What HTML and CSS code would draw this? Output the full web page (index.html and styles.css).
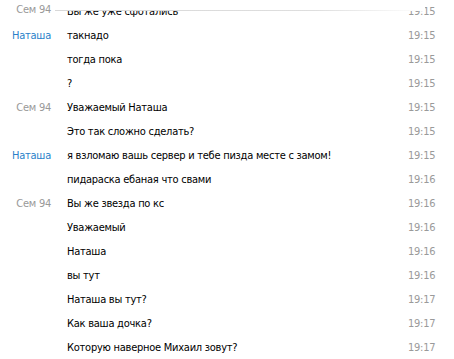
FILE: index.html
```html
<!DOCTYPE html>
<html lang="ru">
<head>
<meta charset="utf-8">
<link rel="stylesheet" href="styles.css">
</head>
<body>
<div class="log">
  <div class="topbar"></div>
  <div class="row first"><span class="name gray">Сем 94</span><span class="msg">Вы же уже сфотались</span><span class="time">19:15</span></div>
  <div class="row"><span class="name blue">Наташа</span><span class="msg">такнадо</span><span class="time">19:15</span></div>
  <div class="row"><span class="name"></span><span class="msg">тогда пока</span><span class="time">19:15</span></div>
  <div class="row"><span class="name"></span><span class="msg">?</span><span class="time">19:15</span></div>
  <div class="row"><span class="name gray">Сем 94</span><span class="msg">Уважаемый Наташа</span><span class="time">19:15</span></div>
  <div class="row"><span class="name"></span><span class="msg">Это так сложно сделать?</span><span class="time">19:15</span></div>
  <div class="row"><span class="name blue">Наташа</span><span class="msg">я взломаю вашь сервер и тебе пизда месте с замом!</span><span class="time">19:15</span></div>
  <div class="row"><span class="name"></span><span class="msg">пидараска ебаная что свами</span><span class="time">19:16</span></div>
  <div class="row"><span class="name gray">Сем 94</span><span class="msg">Вы же звезда по кс</span><span class="time">19:16</span></div>
  <div class="row"><span class="name"></span><span class="msg">Уважаемый</span><span class="time">19:16</span></div>
  <div class="row"><span class="name"></span><span class="msg">Наташа</span><span class="time">19:16</span></div>
  <div class="row"><span class="name"></span><span class="msg">вы тут</span><span class="time">19:16</span></div>
  <div class="row"><span class="name"></span><span class="msg">Наташа вы тут?</span><span class="time">19:17</span></div>
  <div class="row"><span class="name"></span><span class="msg">Как ваша дочка?</span><span class="time">19:17</span></div>
  <div class="row"><span class="name"></span><span class="msg">Которую наверное Михаил зовут?</span><span class="time">19:17</span></div>
</div>
</body>
</html>
```

FILE: styles.css
```css
html, body {
  margin: 0;
  padding: 0;
  background: #ffffff;
}
body {
  font-family: "DejaVu Sans Condensed", "DejaVu Sans", sans-serif;
  font-size: 11px;
  letter-spacing: -0.25px;
  color: #000;
  width: 454px;
  height: 359px;
  overflow: hidden;
}
.log {
  position: relative;
  display: flex;
  flex-direction: column;
}
.topbar {
  position: absolute;
  left: 55px;
  top: 0;
  width: 370px;
  height: 10px;
  background: #fff;
  border-bottom: 1px solid transparent;
  border-image: linear-gradient(to right, #d8d8d8 0%, #dedede 70%, #ffffff 100%) 1;
  z-index: 2;
}
.row {
  display: flex;
  align-items: center;
  height: 24px;
  line-height: 24px;
}
.name {
  width: 51px;
  flex: none;
  text-align: right;
  white-space: nowrap;
}
.gray { color: #999999; }
.blue { color: #2a7fc9; }
.msg {
  flex: none;
  width: 341px;
  margin-left: 16px;
  white-space: nowrap;
}
.time {
  flex: none;
  color: #9a9a9a;
}
.first .name {
  margin-top: -4px;
}
```
